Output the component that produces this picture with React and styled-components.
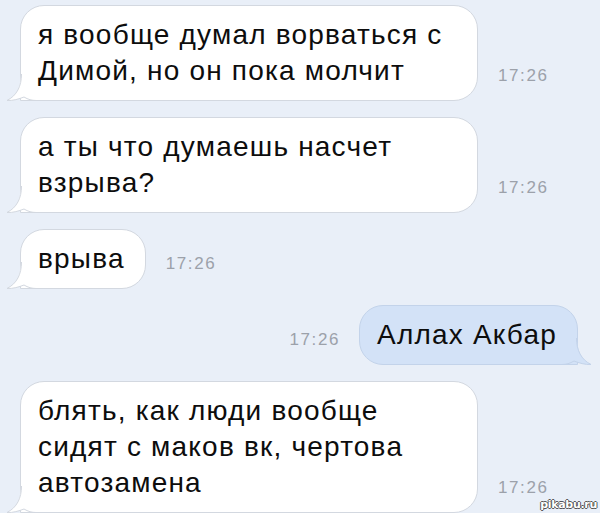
import React from 'react';
import styled, { createGlobalStyle } from 'styled-components';

const GlobalStyle = createGlobalStyle`
  html, body {
    margin: 0;
    padding: 0;
    background: #e9eff8;
  }
  body {
    font-family: 'Liberation Sans', Arial, Helvetica, sans-serif;
    -webkit-font-smoothing: antialiased;
  }
`;

const Screen = styled.div`
  position: relative;
  width: 600px;
  height: 513px;
  box-sizing: border-box;
  padding: 5px 22px 0 20px;
  display: flex;
  flex-direction: column;
  gap: 16px;
  overflow: hidden;
  background: #e9eff8;
`;

const Row = styled.div`
  display: flex;
  align-items: flex-end;
  justify-content: ${p => (p.$out ? 'flex-end' : 'flex-start')};
  gap: ${p => (p.$out ? '19px' : '20px')};
`;

const Bubble = styled.div`
  position: relative;
  box-sizing: border-box;
  width: ${p => (p.$wide ? '458px' : 'auto')};
  padding: 11px 20px 11px 17px;
  font-size: 28px;
  line-height: 36px;
  letter-spacing: 1.2px;
  color: #0d0d0d;
  white-space: nowrap;
  background: ${p => (p.$out ? '#d3e2f7' : '#ffffff')};
  border: 1px solid ${p => (p.$out ? '#c3d3ea' : '#d3d8e0')};
  border-radius: ${p => (p.$out ? '24px 24px 0 24px' : '24px 24px 24px 0')};
`;

const Tail = styled.svg`
  position: absolute;
  bottom: -1px;
  ${p => (p.$out ? 'right: -15px; transform: scaleX(-1);' : 'left: -15px;')}
  width: 30px;
  height: 27px;
  overflow: visible;
`;

const Time = styled.span`
  font-size: 17px;
  line-height: 20px;
  letter-spacing: 1.6px;
  color: #9ca1aa;
  padding-bottom: 15px;
  white-space: nowrap;
`;

const Watermark = styled.span`
  position: absolute;
  right: 3px;
  bottom: 2px;
  font-family: 'DejaVu Sans', sans-serif;
  font-size: 11px;
  font-weight: bold;
  letter-spacing: -0.3px;
  color: #ffffff;
  text-shadow: -1px 0 #555, 1px 0 #555, 0 -1px #555, 0 1px #555;
`;

const BubbleTail = ({ out }) => {
  const fill = out ? '#d3e2f7' : '#ffffff';
  const stroke = out ? '#c3d3ea' : '#d3d8e0';
  return (
    <Tail $out={out} viewBox="0 0 30 27">
      <path
        d="M15 0 C15 12 11 21.5 1 26.5 C7 26.8 13 25 18 23 C22 25.5 26 26 30 26 L30 0 Z"
        fill={fill}
      />
      <path
        d="M15.5 0 C15.5 12 11 21.5 1 26.5 C7 26.8 13 25 18 23 C22 25.5 26 26.5 30 26.5"
        fill="none"
        stroke={stroke}
        strokeWidth="1"
      />
    </Tail>
  );
};

const messages = [
  { lines: ['я вообще думал ворваться с', 'Димой, но он пока молчит'], wide: true },
  { lines: ['а ты что думаешь насчет', 'взрыва?'], wide: true },
  { lines: ['врыва'] },
  { lines: ['Аллах Акбар'], out: true },
  { lines: ['блять, как люди вообще', 'сидят с маков вк, чертова', 'автозамена'], wide: true },
];

const Message = ({ lines, wide, out }) => {
  const bubble = (
    <Bubble $wide={wide} $out={out}>
      {lines.map((l, i) => (
        <React.Fragment key={i}>
          {i > 0 && <br />}
          {l}
        </React.Fragment>
      ))}
      <BubbleTail out={out} />
    </Bubble>
  );
  return (
    <Row $out={out}>
      {out ? (
        <>
          <Time>17:26</Time>
          {bubble}
        </>
      ) : (
        <>
          {bubble}
          <Time>17:26</Time>
        </>
      )}
    </Row>
  );
};

const App = () => (
  <>
    <GlobalStyle />
    <Screen>
      {messages.map((m, i) => (
        <Message key={i} {...m} />
      ))}
      <Watermark>pikabu.ru</Watermark>
    </Screen>
  </>
);

export default App;
